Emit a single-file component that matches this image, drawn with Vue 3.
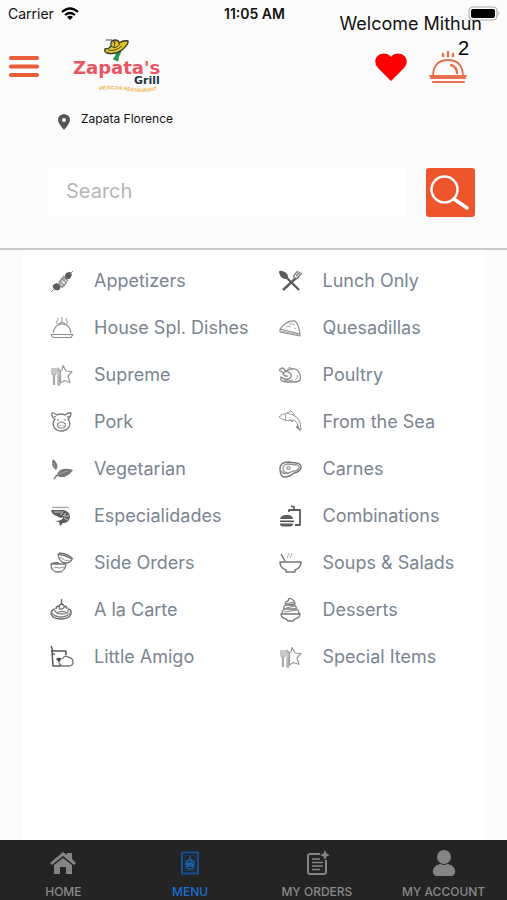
<script setup>
import { ref } from 'vue'

const search = ref('')

// Each shape: d = path data, f = fill colour, s = stroke colour, w = stroke width
const star = [
  { d: 'M13 2.500l3 5.500 6 .5-4 4.500 2 6.500-5.500-2-4 2.500V7.500L12 7z', s: '#999', w: 1.2 },
  { d: 'M2 5v5q0 2 1.500 2v10M4 5v6M6 5v5q0 2-1.500 2v10M8 22V5q3 3 1.500 9v8z', s: '#aaa', w: 1.3 },
]

const items = [
  { name: 'Appetizers', art: [
    { d: 'M1 23L23 2', s: '#888', w: 1 },
    { d: 'M3 16q3-3 6-1 3 3 0 6-3 1-5-1-2-2-1-4zM15 6q1-3 5-3 3 2 1 5-1 3-5 2-2-2-1-4z', f: '#5c5c5c' },
    { d: 'M9 12l6 5M8 14l5 5M11 9l6 5M13 7l5 5M9 13l5-5M12 18l5-5', s: '#8a8a8a', w: 1.5 },
  ] },
  { name: 'Lunch Only', art: [
    { d: 'M7 8l13 13M17 9L4 21', s: '#5c5c5c', w: 2.4 },
    { d: 'M0 3q0-2 3-1 5 1 6 5 0 3-3 3Q1 9 0 3z', f: '#5c5c5c' },
    { d: 'M15 9q-1-2 1-4l3-3M17 7l4-4M18 9l5-5M15 9q3 2 5-1', s: '#777', w: 1.3 },
  ] },
  { name: 'House Spl. Dishes', art: [
    { d: 'M3 17q2-9 9-9 8 0 9 9M1 18.500h22l-2 3H3zM9 8q3-3 6 0', s: '#8a8a8a', w: 1.1 },
    { d: 'M12 1v6M7 2q2 1 0 3t1 3M17 2q-2 1 0 3t-1 3', s: '#999', w: 1 },
  ] },
  { name: 'Quesadillas', art: [
    { d: 'M1 13Q8 4 16 5q4 4 5 13L1 13v3l20 4v-2', s: '#8a8a8a', w: 1.1 },
    { d: 'M2 15l18 4M10 8q4-1 6 1M7 11q3-2 5 0M15 12l2 1', s: '#aaa', w: 1 },
  ] },
  { name: 'Supreme', art: star },
  { name: 'Poultry', art: [
    { d: 'M4 9L1 8q-1-2 1-2 1-2 3 0l2 2q11-6 14 4 2 7-5 7H8Q1 19 2 14q3 3 8 2 4-3 1-6-4-3-7 0 1 4 5 3', s: '#888', w: 1.3 },
    { d: 'M18 12q2 3-2 5M9 7q0-4 3-2v2M5 17q4 2 9 0', s: '#999', w: 1 },
  ] },
  { name: 'Pork', art: [
    { d: 'M7 5Q3 2 2 3q-1 4 3 6-3 4-1 8 2 4 7 4t8-4q2-4-1-8 3-2 3-6-2-1-6 2-4-2-8 0zM4 6l2 1M19 6l-2 1', s: '#777', w: 1.3 },
    { d: 'M7.500 14q4-4 8 0 0 3-2 4h-4q-2-1-2-4zM10 15v1M13 15v1M8 9v2M15 9v2', s: '#888', w: 1.1 },
  ] },
  { name: 'From the Sea', art: [
    { d: 'M0 7q6-6 14-2 8 3 8 15l-5-3 2-1Q18 10 12 10 6 12 0 7z', s: '#999', w: 1 },
    { d: 'M8 3l4-2 4 4M6 4q2 3 0 6M11 10l2 2 2-2', s: '#999', w: 1 },
    { d: 'M19 15l3 7-5-5z', f: '#888' },
  ] },
  { name: 'Vegetarian', art: [
    { d: 'M3 2q7 6 3 11Q0 9 3 2zM7 19q1-10 16-6-7 10-16 6z', f: '#777' },
    { d: 'M4 22l3-4M8 17l11-3M6 12L4 6', s: '#777', w: 1.4 },
    { d: 'M9 17l9-3M5 11L4 6', s: '#bbb', w: .6 },
  ] },
  { name: 'Carnes', art: [
    { d: 'M1 12q0-7 8-7l8 1q6 1 5 5-1 4-7 5-4 4-10 4-4-1-4-8z', s: '#777', w: 1.4 },
    { d: 'M4 11q0-4 6-4l8 1q3 1 2 3-1 3-6 3-5 3-8 1-2-1-2-4zM2 14q3 4 8 2M5 17l10-3 6-1M8 10q3-1 3 1t-3 1z', s: '#999', w: 1.3 },
  ] },
  { name: 'Especialidades', art: [
    { d: 'M2 3.500h17', s: '#aaa', w: 1.5 },
    { d: 'M1 6h13q6 2 6 7-1 6-7 6l-3 3-1-4-4-1q8 0 8-4-3 2-6-1-5-1-6-6z', f: '#5c5c5c' },
    { d: 'M4 8h7M13 7l-2 4M16 9l-3 3M19 12h-5M18 16l-4-2', s: '#ddd', w: .9 },
  ] },
  { name: 'Combinations', art: [
    { d: 'M1 15q1-4 6-4h2q4 0 5 4zM1 19.500h13q0 3-3 3H4q-3 0-3-3z', f: '#5c5c5c' },
    { d: 'M1 17.300h14', s: '#555', w: 1.6 },
    { d: 'M10 8V6h11v15h-5M15 6V3l-3-1', s: '#5c5c5c', w: 1.8 },
  ] },
  { name: 'Side Orders', art: [
    { d: 'M8 3q1 8 7 9 6 0 7-4Q15 4 8 3zM9 2q8 0 14 6M1 13q0 8 7 8 7 0 8-8zM1 13q4-2 8-1', s: '#777', w: 1.3 },
    { d: 'M10 6q4 4 10 4M4 16q5 2 10 0M5 21h7', s: '#999', w: 1 },
  ] },
  { name: 'Soups & Salads', art: [
    { d: 'M1 11h21q0 6-6 8v2H7v-2q-6-2-6-8zM6 10L2 3', s: '#777', w: 1.5 },
    { d: 'M9 2q2 1 0 3t0 2M12 2q2 1 0 3t0 2', s: '#aaa', w: 1 },
  ] },
  { name: 'A la Carte', art: [
    { d: 'M11.500 1v6M9 8q3-4 5 0 3 0 3 3M6 11q0-3 3-3 0 4 3 3t2-3M5 11q-4 1-4 5 2 5 10 5t10-5q1-4-3-5', s: '#666', w: 1.3 },
    { d: 'M5 12q0 4 7 4 7 0 6-4M2 15q3 4 9 4t9-4M6 15q6-3 12 0', s: '#888', w: 1.3 },
  ] },
  { name: 'Desserts', art: [
    { d: 'M7 7q-2-3 2-4l1-3q6 2 6 6zM5 11q-1-3 2-4h8q3 1 2 4zM3 16q0-4 3-5h11q3 1 3 5zM2 16h19q0 4-5 5l-2 2H9l-2-2q-5-1-5-5z', s: '#777', w: 1.3 },
    { d: 'M7 6l8-2M7 10l9-2M5 14l13-2', s: '#888', w: 1.1 },
  ] },
  { name: 'Little Amigo', art: [
    { d: 'M1 6h15v4M2 6l1 15h8M3 6L1 1M2 9h3', s: '#555', w: 1.5 },
    { d: 'M13 13q2-3 5-1 5 1 5 5 0 4-4 4h-6q-4-1-4-4 1-3 4-4z', s: '#777', w: 1.3 },
    { d: 'M6 14q2-2 5-1l-2 4z', f: '#444' },
  ] },
  { name: 'Special Items', art: star },
]
</script>

<template>
  <div class="app">
    <header class="header">
      <div class="status">
        <span class="carrier">Carrier
          <svg width="18" height="13" viewBox="0 0 18 13" aria-hidden="true">
            <g fill="none" stroke="#000" stroke-width="2.200">
              <path d="M1 5q8-7 16 0" /><path d="M4 8q5-4 10 0" />
            </g>
            <path d="M6 10q3-2.500 6 0l-3 3z" />
          </svg>
        </span>
        <span class="time">11:05 AM</span>
        <span class="power">
          <svg width="33" height="15" viewBox="0 0 33 15" aria-hidden="true">
            <rect x="1" y="1" width="28" height="13" rx="4" fill="#fff" stroke="#aaa" stroke-width="1.200" />
            <rect x="3" y="3" width="24" height="9" rx="2" />
            <path d="M30.500 5q2 2.500 0 5z" fill="#aaa" />
          </svg>
        </span>
        <span class="welcome">Welcome Mithun</span>
      </div>

      <div class="brand">
        <button class="plain" type="button" aria-label="Open navigation">
          <svg width="32" height="24" viewBox="0 0 32 24">
            <path d="M3 3h26M3 11.500h26M3 20h26" stroke="#eb5e3a" stroke-width="4.200" stroke-linecap="round" />
          </svg>
        </button>
        <svg class="logo" width="96" height="60" viewBox="0 0 96 60" role="img" aria-label="Zapata's Grill">
          <path d="M47 13q5 0 5 2-3 4-3 9l-5-2q4-3 3-9z" fill="#16a34a" stroke="#14532d" stroke-width=".5" />
          <path d="M36 12q4 0 6-3-1-6 4-6 4 0 4 3 5-3 9-2 1 3-6 9-7 5-15 3-3-1-2-4z" fill="#e3c51b" stroke="#333" stroke-width="1.300" />
          <path d="M42 9q4 4 9-2M37 3l6 0 3 4M46 4l-1 7M39 13q7 2 14-4" fill="none" stroke="#444" stroke-width="1" />
          <text class="word" x="4" y="37">Zapata's</text>
          <text class="grill" x="65" y="47">Grill</text>
          <path id="ribbon" d="M30 53q15-2 31 1t34-3" fill="none" />
          <text class="ribbon"><textPath href="#ribbon">MEXICAN RESTAURANT</textPath></text>
        </svg>
        <div class="actions">
          <button class="plain" type="button" aria-label="Favourites">
            <svg width="32" height="28" viewBox="0 0 32 28">
              <path d="M16 28L3 15Q-2 9 2 3.500 6-1 12 1q3 1 4 3 1-2 4-3 6-2 10 2.500 4 5.500-1 11.500z" fill="#f00" />
            </svg>
          </button>
          <button class="plain tray" type="button" aria-label="Order tray, 2">
            <svg width="40" height="34" viewBox="0 0 40 34" fill="none" stroke="#e9704c" stroke-linecap="round">
              <path d="M5 25Q6 10 20 10t15 15M2 26h36M3 28h34" stroke-width="1.800" />
              <path d="M5 32h31" stroke-width="2.200" />
              <path d="M23 15q6 2 6 8" stroke-width="2.400" />
              <path d="M20 2v4M15 4v2M25 4v2" stroke-width="2.400" />
            </svg>
            <span class="count">2</span>
          </button>
        </div>
      </div>

      <div class="place">
        <svg width="12" height="16" viewBox="0 0 12 16" aria-hidden="true">
          <path fill-rule="evenodd" d="M6 0q6 1 6 6 0 3-6 10Q0 9 0 6q0-5 6-6zm0 4a2 2 0 1 0 0 4 2 2 0 0 0 0-4z" fill="#555" />
        </svg>
        <span class="place-name">Zapata Florence</span>
      </div>

      <form class="search" @submit.prevent>
        <input v-model="search" type="text" placeholder="Search" aria-label="Search">
        <button type="submit" aria-label="Search">
          <svg width="49" height="49" viewBox="0 0 49 49" fill="none" stroke="#fff">
            <circle cx="18.500" cy="21.500" r="13" stroke-width="2.500" />
            <path d="M28 31l13 9" stroke-width="3.500" stroke-linecap="round" />
          </svg>
        </button>
      </form>
    </header>

    <main class="panel">
      <ul class="menu">
        <li v-for="item in items" :key="item.name">
          <a href="#">
            <svg width="24" height="24" viewBox="0 0 24 24" aria-hidden="true">
              <path
                v-for="(p, i) in item.art" :key="i" :d="p.d"
                :fill="p.f || 'none'" :stroke="p.s || 'none'" :stroke-width="p.w || 0"
                stroke-linejoin="round"
              />
            </svg>
            <span>{{ item.name }}</span>
          </a>
        </li>
      </ul>
    </main>

    <nav class="tabs">
      <a href="#">
        <svg width="28" height="28" viewBox="0 0 28 28">
          <path d="M1 14L14 3l4 3V4h5v6l4 4-2 2-11-9L3 16z" fill="#858585" />
          <path d="M5 16l9-7 9 7v9h-6v-7h-6v7H5z" fill="#858585" />
        </svg>
        HOME
      </a>
      <a href="#" class="active">
        <svg width="28" height="28" viewBox="0 0 28 28" fill="none" stroke="#174f94">
          <path d="M6 3.500h16v21H6z" stroke-width="2" />
          <path d="M9 6.500h10v15H9z" stroke="#153d70" />
          <path d="M14 7v3M10 15q0-4 4-4t4 4zM10 17h8M11 15v4q3 2 6 0v-4M12 13l2 2 2-2" stroke="#1965b8" stroke-width="1.300" />
        </svg>
        MENU
      </a>
      <a href="#">
        <svg width="28" height="28" viewBox="0 0 28 28" fill="none" stroke="#858585">
          <path d="M17 5H7q-2 0-2 2v16q0 2 2 2h14q2 0 2-2V11" stroke-width="2" />
          <path d="M9 10h8M9 13.500h11M9 17h11M9 20.500h8" stroke-width="1.500" />
          <path d="M22 1l1.500 3.500L27 6l-3.500 1.500L22 11l-1.500-3.500L17 6l3.500-1.500z" fill="#858585" stroke="none" />
        </svg>
        MY ORDERS
      </a>
      <a href="#">
        <svg width="28" height="28" viewBox="0 0 28 28" fill="#858585">
          <circle cx="14" cy="8" r="7" />
          <path d="M3 24q-1-5 4-8 3-1 4-1 3 2 6 0 1 0 4 1 5 3 4 8-1 3-3 3H6q-2 0-3-3z" />
        </svg>
        MY ACCOUNT
      </a>
    </nav>
  </div>
</template>

<style>
body {
  background: #fbfbfb;
}
</style>

<style scoped>
.app {
  display: flex;
  flex-direction: column;
  min-height: 100vh;
  font-family: Inter, "Liberation Sans", sans-serif;
  color: #111;
}
svg {
  display: block;
  flex: none;
}
a {
  text-decoration: none;
}
.plain {
  padding: 0;
  border: 0;
  background: none;
}
.header {
  border-bottom: 2px solid #c9c9c9;
  padding-bottom: 31px;
}
.status {
  position: relative;
  display: grid;
  grid-template-columns: 1fr auto 1fr;
  align-items: center;
  height: 28px;
  padding: 0 6px 2px 8px;
  box-sizing: border-box;
  font-size: 14px;
}
.carrier {
  display: flex;
  align-items: center;
  gap: 7px;
}
.time {
  font-weight: 600;
}
.power {
  justify-self: end;
}
.welcome {
  position: absolute;
  right: 25px;
  top: 13px;
  font-size: 18px;
  line-height: 22px;
}
.brand {
  display: flex;
  align-items: center;
  height: 78px;
  padding: 0 39px 0 8px;
}
.logo {
  margin-left: 29px;
}
.word {
  font: 700 18px "DejaVu Sans", sans-serif;
  fill: #ea5560;
}
.grill {
  font: 700 11px "DejaVu Sans", sans-serif;
  fill: #26333c;
}
.ribbon {
  font: italic 700 5px "Liberation Sans", sans-serif;
  fill: #f0b13d;
}
.actions {
  display: flex;
  align-items: center;
  gap: 21px;
  margin-left: auto;
}
.tray {
  position: relative;
}
.count {
  position: absolute;
  right: -1px;
  top: -14px;
  font-size: 20px;
  line-height: 24px;
}
.place {
  display: flex;
  align-items: center;
  gap: 11px;
  height: 28px;
  padding-left: 58px;
  font-size: 12px;
  line-height: 16px;
}
.place svg {
  margin-top: 4px;
}
.place-name {
  padding-bottom: 2px;
}
.search {
  display: flex;
  gap: 20px;
  padding: 34px 32px 0 48px;
}
.search input {
  flex: 1;
  min-width: 0;
  height: 49px;
  box-sizing: border-box;
  padding: 0 18px 4px;
  border: 0;
  background: #fff;
  font: 20px Inter, "Liberation Sans", sans-serif;
}
.search input::placeholder {
  color: #b5b5b5;
}
.search button {
  padding: 0;
  border: 0;
  border-radius: 3px;
  background: #ee552c;
}
.panel {
  flex: 1;
  margin: 0 23px;
  padding: 7px 4px 0 0;
  background: #fff;
}
.menu {
  display: grid;
  grid-template-columns: 1fr 1fr;
  margin: 0;
  padding: 0;
  list-style: none;
}
.menu a {
  display: flex;
  align-items: center;
  gap: 20px;
  height: 47px;
  padding-left: 27px;
  font-size: 18px;
  color: #7a8490;
  white-space: nowrap;
}
.tabs {
  display: grid;
  grid-template-columns: repeat(4, 1fr);
  height: 60px;
  background: #242424;
}
.tabs a {
  display: flex;
  flex-direction: column;
  align-items: center;
  gap: 7px;
  padding-top: 9px;
  font-size: 12px;
  line-height: 16px;
  font-weight: 500;
  color: #8a8a8a;
}
.tabs .active {
  color: #1b6fd0;
}
</style>
